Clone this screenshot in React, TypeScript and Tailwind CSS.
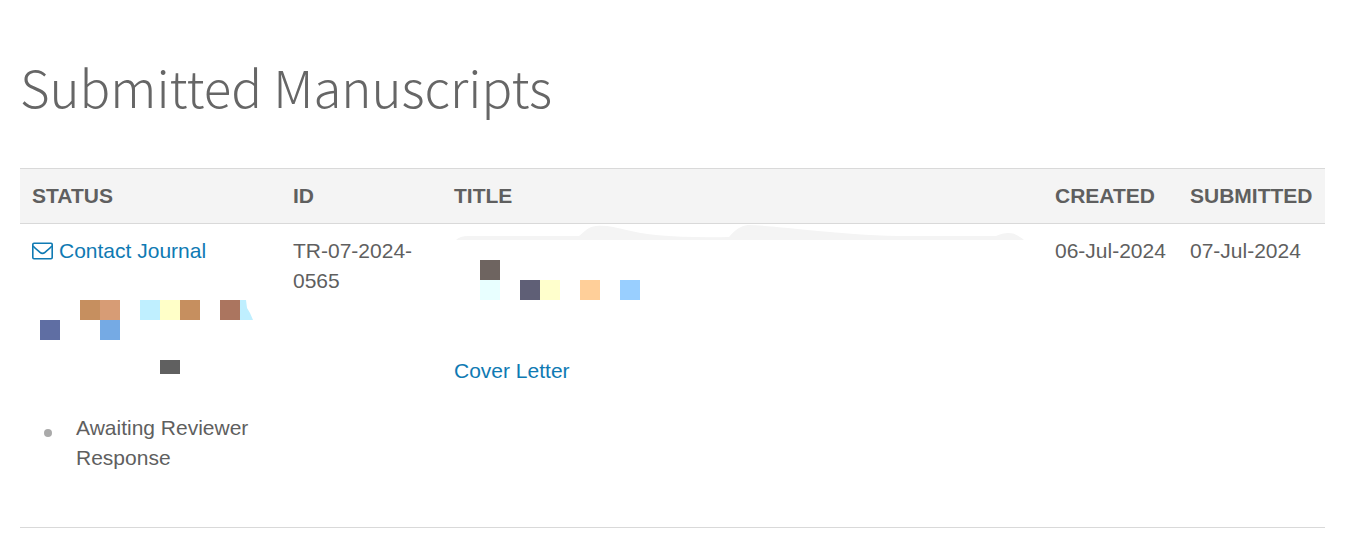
interface Block {
  x: number
  y: number
  h?: number
  fill: string
}

const statusBlocks: Block[] = [
  { x: 48, y: 0, fill: '#c68f5f' },
  { x: 68, y: 0, fill: '#d79c75' },
  { x: 108, y: 0, fill: '#bfefff' },
  { x: 128, y: 0, fill: '#ffffc8' },
  { x: 148, y: 0, fill: '#c68f5f' },
  { x: 188, y: 0, fill: '#ab755f' },
  { x: 8, y: 20, fill: '#5f6ea3' },
  { x: 68, y: 20, fill: '#75aae4' },
  { x: 128, y: 60, h: 14, fill: '#606060' },
]

const titleBlocks: Block[] = [
  { x: 26, y: 36, fill: '#6e6460' },
  { x: 26, y: 56, fill: '#e8ffff' },
  { x: 66, y: 56, fill: '#5f5f76' },
  { x: 86, y: 56, fill: '#ffffcc' },
  { x: 126, y: 56, fill: '#ffcf99' },
  { x: 166, y: 56, fill: '#99cfff' },
]

function Blocks({ items }: { items: Block[] }) {
  return (
    <>
      {items.map(b => (
        <rect key={`${b.x}-${b.y}`} x={b.x} y={b.y} width={20} height={b.h ?? 20} fill={b.fill} />
      ))}
    </>
  )
}

function EnvelopeIcon() {
  return (
    <svg
      className="mr-[6px] inline-block align-[-2px]"
      width="21"
      height="18"
      viewBox="0 0 21 18"
      fill="none"
      stroke="currentColor"
      strokeWidth="1.6"
      aria-hidden="true"
    >
      <rect x="0.8" y="1.3" width="19.4" height="15.4" rx="1.2" />
      <path d="M1 4 C3.6 6.8 6 8.6 8 10.3 C9.7 11.7 11.3 11.7 13 10.3 C15 8.6 17.4 6.8 20 4" />
    </svg>
  )
}

export default function App() {
  return (
    <main
      className="pt-[50px] pr-[29px] pb-[22px] pl-5 text-[21px] leading-[30px] text-[#5f5f5f]"
      style={{ fontFamily: '"Liberation Sans", Arial, sans-serif' }}
    >
      <h1
        className="mb-[46px] text-[51px] leading-[72px] font-light text-[#666]"
        style={{ fontFamily: '"Noto Sans CJK SC", sans-serif' }}
      >
        Submitted Manuscripts
      </h1>

      <table className="w-full table-fixed border-collapse text-left">
        <thead>
          <tr className="border-y border-[#d9d9d9] bg-[#f4f4f4]">
            <th className="w-[261px] p-3">STATUS</th>
            <th className="w-[161px] p-3">ID</th>
            <th className="p-3">TITLE</th>
            <th className="w-[135px] p-3">CREATED</th>
            <th className="w-[147px] p-3">SUBMITTED</th>
          </tr>
        </thead>
        <tbody>
          <tr className="border-b border-[#d9d9d9] align-top">
            <td className="px-3 pt-3 pb-[54px]">
              <a href="#contact" className="block whitespace-nowrap text-[#0f7ab3]">
                <EnvelopeIcon />
                Contact Journal
              </a>
              <svg className="mt-[34px] mb-[39px] block" width="222" height="74" viewBox="0 0 222 74">
                <Blocks items={statusBlocks} />
                <path d="M208 0h6l1 8 3 5 3 7h-13z" fill="#bfefff" />
              </svg>
              <ul>
                <li className="flex gap-6 pl-3">
                  <span className="mt-4 size-2 shrink-0 rounded-full bg-[#aaa]" />
                  Awaiting Reviewer Response
                </li>
              </ul>
            </td>
            <td className="p-3">TR-07-2024-0565</td>
            <td className="px-3 pb-3">
              <svg className="block" width="570" height="132" viewBox="0 0 570 132">
                {/* top edge of the blanked-out title */}
                <path
                  d="M2 16 Q6 12 14 12 H125 C131 7 134 3 142 2 C160 0 175 9 202 11 Q235 14 275 13 C281 6 286 2 294 1 C330 2 370 10 445 12 H542 C552 8 560 7 570 16 Z"
                  fill="#f4f4f4"
                />
                <Blocks items={titleBlocks} />
              </svg>
              <a href="#cover-letter" className="text-[#0f7ab3]">
                Cover Letter
              </a>
            </td>
            <td className="p-3 whitespace-nowrap">06-Jul-2024</td>
            <td className="p-3 whitespace-nowrap">07-Jul-2024</td>
          </tr>
        </tbody>
      </table>
    </main>
  )
}
